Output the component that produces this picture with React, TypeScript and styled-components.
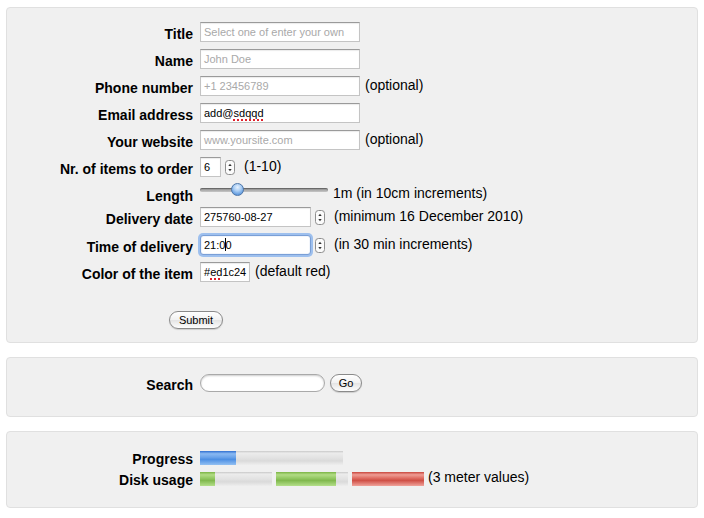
import React from 'react';
import styled, { createGlobalStyle } from 'styled-components';

const GlobalStyle = createGlobalStyle`
  html, body {
    margin: 0;
    padding: 0;
    background: #ffffff;
  }
  body {
    font-family: "Liberation Sans", Helvetica, Arial, sans-serif;
    color: #000;
  }
`;

const Page = styled.div`
  width: 704px;
  padding: 7px 6px 0 6px;
  box-sizing: border-box;
  display: flex;
  flex-direction: column;
  gap: 14px;
`;

const Panel = styled.div<{ padTop: number; padBottom: number }>`
  background: #f0f0f0;
  border: 1px solid #e0e0e0;
  border-radius: 4px;
  padding: ${p => p.padTop}px 0 ${p => p.padBottom}px 0;
  display: flex;
  flex-direction: column;
`;

const Row = styled.div<{ h?: number; mb?: number }>`
  display: grid;
  grid-template-columns: 186px 1fr;
  column-gap: 7px;
  align-items: center;
  height: ${p => p.h || 20}px;
  margin-bottom: ${p => (p.mb === undefined ? 7 : p.mb)}px;
`;

const Label = styled.label`
  font-size: 14px;
  font-weight: bold;
  text-align: right;
  white-space: nowrap;
  padding-top: 3px;
`;

const Controls = styled.div`
  display: flex;
  align-items: center;
  gap: 5px;
  height: 100%;
`;

const Field = styled.div<{ w: number; placeholder?: boolean; focused?: boolean }>`
  width: ${p => p.w}px;
  height: 20px;
  box-sizing: border-box;
  background: #fff;
  border: 1px solid ${p => (p.focused ? '#7a9fd6' : '#c4c4c4')};
  border-top-color: ${p => (p.focused ? '#7a9fd6' : '#9a9a9a')};
  box-shadow: ${p => (p.focused ? '0 0 0 2px #9ec0ee, inset 0 0 1px #6f95d1' : 'inset 0 1px 1px rgba(0,0,0,0.08)')};
  border-radius: ${p => (p.focused ? '3px' : '0')};
  font-size: 11px;
  line-height: 18px;
  padding: 0 3px;
  color: ${p => (p.placeholder ? '#a9a9a9' : '#000')};
  white-space: nowrap;
  overflow: hidden;
`;

const Spell = styled.span`
  text-decoration: underline dotted #e0202a;
  text-decoration-thickness: 2px;
  text-underline-offset: 2px;
`;

const Caret = styled.span`
  display: inline-block;
  width: 1px;
  height: 13px;
  background: #000;
  vertical-align: -2px;
  margin: 0 -1px 0 0;
`;

const Side = styled.span<{ ml?: number }>`
  font-size: 14px;
  margin-left: ${p => p.ml || 0}px;
  margin-bottom: 3px;
  white-space: nowrap;
`;

const SpinBox = styled.div`
  display: flex;
  align-items: center;
  margin-left: -1px;
`;

function Spinner() {
  return (
    <SpinBox>
      <svg width="10" height="15" viewBox="0 0 10 15">
        <rect x="0.5" y="0.5" width="9" height="14" rx="3" fill="#fbfbfb" stroke="#8e8e8e" />
        <path d="M3.3 6 L5 3.8 L6.7 6 Z" fill="#333" />
        <path d="M3.3 9 L5 11.2 L6.7 9 Z" fill="#333" />
      </svg>
    </SpinBox>
  );
}

const SliderTrack = styled.div`
  position: relative;
  width: 128px;
  height: 4px;
  border-radius: 2px;
  background: linear-gradient(#8a8a8a, #c7c7c7);
  box-shadow: inset 0 1px 1px rgba(0, 0, 0, 0.3);
  margin-top: -8px;
`;

const SliderThumb = styled.div<{ left: number }>`
  position: absolute;
  top: -5px;
  left: ${p => p.left}px;
  width: 13px;
  height: 13px;
  box-sizing: border-box;
  border-radius: 50%;
  border: 1px solid #4e76a8;
  background: radial-gradient(circle at 50% 30%, #e8f2fd 0%, #a9cdf4 40%, #5c97dd 80%, #4a86d1 100%);
`;

const SubmitWrap = styled.div`
  margin-top: 29px;
  margin-left: 162px;
  display: flex;
`;

const Button = styled.button<{ w: number }>`
  width: ${p => p.w}px;
  height: 18px;
  padding: 0;
  border: 1px solid #8a8a8a;
  border-radius: 9px;
  background: linear-gradient(#ffffff, #f1f1f1 50%, #e4e4e4 51%, #fdfdfd);
  box-shadow: 0 1px 1px rgba(0, 0, 0, 0.15);
  font-family: "Liberation Sans", Helvetica, Arial, sans-serif;
  font-size: 11px;
  color: #000;
  line-height: 16px;
`;

const SearchField = styled.div`
  width: 125px;
  height: 18px;
  box-sizing: border-box;
  background: #fff;
  border: 1px solid #a9a9a9;
  border-radius: 9px;
  box-shadow: inset 0 1px 2px rgba(0, 0, 0, 0.2);
`;

const Track = styled.div<{ w: number }>`
  position: relative;
  width: ${p => p.w}px;
  height: 14px;
  overflow: hidden;
  background: linear-gradient(#c8c8c8 0%, #ececec 15%, #e2e2e2 50%, #dadada 70%, #eeeeee 100%);
`;

const Fill = styled.div<{ kind: 'blue' | 'green' | 'red' }>`
  height: 100%;
  background: ${p =>
    p.kind === 'blue'
      ? 'linear-gradient(#2f6fd0 0%, #8ab9f2 20%, #6aa3ea 45%, #4d8fe3 60%, #93c0f2 100%)'
      : p.kind === 'green'
      ? 'linear-gradient(#7bb444 0%, #b2dc85 20%, #93c862 45%, #80b84d 60%, #b4df8a 100%)'
      : 'linear-gradient(#c8463c 0%, #ef9d95 20%, #de6a60 45%, #cf4f45 60%, #f0a39b 100%)'};
`;

const Meters = styled.div`
  display: flex;
  align-items: center;
  gap: 4px;
`;

function Meter({ w, value, kind }: { w: number; value: number; kind: 'blue' | 'green' | 'red' }) {
  return (
    <Track w={w}>
      <Fill kind={kind} style={{ width: `${value * 100}%` }} />
    </Track>
  );
}

export default function App() {
  return (
    <>
      <GlobalStyle />
      <Page>
        <Panel padTop={14} padBottom={13}>
          <Row>
            <Label>Title</Label>
            <Controls>
              <Field w={160} placeholder>Select one of enter your own</Field>
            </Controls>
          </Row>
          <Row>
            <Label>Name</Label>
            <Controls>
              <Field w={160} placeholder>John Doe</Field>
            </Controls>
          </Row>
          <Row>
            <Label>Phone number</Label>
            <Controls>
              <Field w={160} placeholder>+1 23456789</Field>
              <Side>(optional)</Side>
            </Controls>
          </Row>
          <Row>
            <Label>Email address</Label>
            <Controls>
              <Field w={160}>
                add@<Spell>sdqqd</Spell>
              </Field>
            </Controls>
          </Row>
          <Row>
            <Label>Your website</Label>
            <Controls>
              <Field w={160} placeholder>www.yoursite.com</Field>
              <Side>(optional)</Side>
            </Controls>
          </Row>
          <Row>
            <Label>Nr. of items to order</Label>
            <Controls>
              <Field w={21}>6</Field>
              <Spinner />
              <Side ml={4}>(1-10)</Side>
            </Controls>
          </Row>
          <Row mb={3}>
            <Label>Length</Label>
            <Controls>
              <SliderTrack>
                <SliderThumb left={31} />
              </SliderTrack>
              <Side>1m (in 10cm increments)</Side>
            </Controls>
          </Row>
          <Row mb={8}>
            <Label>Delivery date</Label>
            <Controls>
              <Field w={111}>275760-08-27</Field>
              <Spinner />
              <Side ml={4}>(minimum 16 December 2010)</Side>
            </Controls>
          </Row>
          <Row>
            <Label>Time of delivery</Label>
            <Controls>
              <Field w={111} focused>
                21:0<Caret />0
              </Field>
              <Spinner />
              <Side ml={4}>(in 30 min increments)</Side>
            </Controls>
          </Row>
          <Row mb={0}>
            <Label>Color of the item</Label>
            <Controls>
              <Field w={50}>
                #<Spell>ed</Spell>1c24
              </Field>
              <Side>(default red)</Side>
            </Controls>
          </Row>
          <SubmitWrap>
            <Button w={54}>Submit</Button>
          </SubmitWrap>
        </Panel>

        <Panel padTop={15} padBottom={23}>
          <Row mb={0}>
            <Label>Search</Label>
            <Controls>
              <SearchField />
              <Button w={32}>Go</Button>
            </Controls>
          </Row>
        </Panel>

        <Panel padTop={16} padBottom={20}>
          <Row h={16} mb={5}>
            <Label>Progress</Label>
            <Controls>
              <Meter w={143} value={0.25} kind="blue" />
            </Controls>
          </Row>
          <Row h={18} mb={0}>
            <Label>Disk usage</Label>
            <Controls>
              <Meters>
                <Meter w={72} value={0.21} kind="green" />
                <Meter w={72} value={0.83} kind="green" />
                <Meter w={72} value={1} kind="red" />
              </Meters>
              <Side ml={-1}>(3 meter values)</Side>
            </Controls>
          </Row>
        </Panel>
      </Page>
    </>
  );
}
